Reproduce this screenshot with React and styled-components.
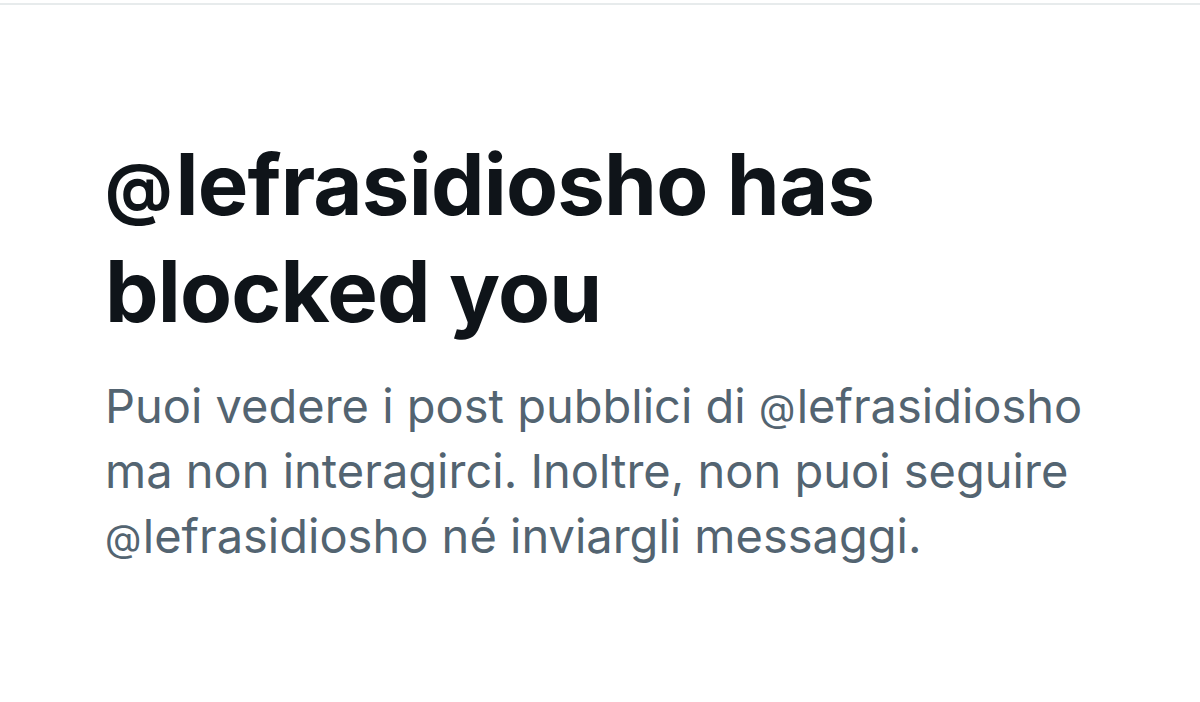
import React from "react";
import styled, { createGlobalStyle } from "styled-components";

const Global = createGlobalStyle`
  html, body { margin: 0; padding: 0; background: #ffffff; }
  body { font-family: Inter, "Noto Sans", sans-serif; }
`;

const Page = styled.div`
  width: 1200px;
  height: 702px;
  background: #ffffff;
  display: flex;
  flex-direction: column;
  overflow: hidden;
`;

const TopRule = styled.div`
  margin-top: 3px;
  height: 2px;
  background: #e7ebec;
  flex: none;
`;

const Content = styled.div`
  padding: 126px 95px 0 105px;
  display: flex;
  flex-direction: column;
  gap: 28px;
`;

const Title = styled.h1`
  margin: 0;
  font-family: Inter, "Noto Sans", sans-serif;
  font-weight: 700;
  font-size: 85px;
  line-height: 107px;
  letter-spacing: -0.8px;
  color: #0f1419;
`;

const Body = styled.p`
  margin: 0;
  font-family: Inter, "Noto Sans", sans-serif;
  font-weight: 400;
  font-size: 47px;
  line-height: 65px;
  color: #536471;
`;

const Phrase = styled.span`
  white-space: nowrap;
`;

const At = styled.span`
  font-size: ${(p) => p.$scale}em;
  line-height: 1;
  vertical-align: ${(p) => p.$lift}em;
  margin-right: ${(p) => p.$gap}em;
`;

function Handle({ big }) {
  return (
    <Phrase>
      <At $scale={big ? 0.78 : 0.8} $lift={big ? 0.04 : 0.03} $gap={big ? 0.06 : 0.04}>
        @
      </At>
      lefrasidiosho
    </Phrase>
  );
}

export default function App() {
  return (
    <Page>
      <Global />
      <TopRule />
      <Content>
        <Title>
          <Handle big /> <Phrase>has</Phrase> <Phrase>blocked you</Phrase>
        </Title>
        <Body>
          <Phrase>Puoi vedere i post pubblici di</Phrase> <Handle />{" "}
          <Phrase>ma non interagirci. Inoltre, non puoi seguire</Phrase> <Handle />{" "}
          <Phrase>né inviargli messaggi.</Phrase>
        </Body>
      </Content>
    </Page>
  );
}
